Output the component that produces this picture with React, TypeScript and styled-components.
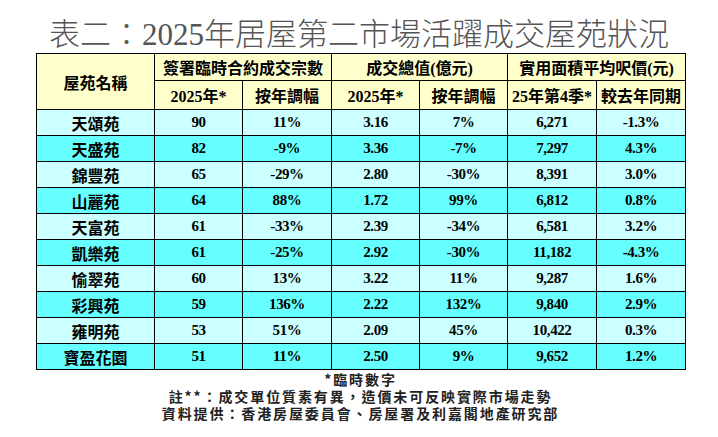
import styled, { createGlobalStyle } from 'styled-components';

type Row = {
  name: string;
  deals: string;
  dealsYoy: string;
  value: string;
  valueYoy: string;
  price: string;
  priceYoy: string;
};

const rows: Row[] = [
  { name: '天頌苑', deals: '90', dealsYoy: '11%', value: '3.16', valueYoy: '7%', price: '6,271', priceYoy: '-1.3%' },
  { name: '天盛苑', deals: '82', dealsYoy: '-9%', value: '3.36', valueYoy: '-7%', price: '7,297', priceYoy: '4.3%' },
  { name: '錦豐苑', deals: '65', dealsYoy: '-29%', value: '2.80', valueYoy: '-30%', price: '8,391', priceYoy: '3.0%' },
  { name: '山麗苑', deals: '64', dealsYoy: '88%', value: '1.72', valueYoy: '99%', price: '6,812', priceYoy: '0.8%' },
  { name: '天富苑', deals: '61', dealsYoy: '-33%', value: '2.39', valueYoy: '-34%', price: '6,581', priceYoy: '3.2%' },
  { name: '凱樂苑', deals: '61', dealsYoy: '-25%', value: '2.92', valueYoy: '-30%', price: '11,182', priceYoy: '-4.3%' },
  { name: '愉翠苑', deals: '60', dealsYoy: '13%', value: '3.22', valueYoy: '11%', price: '9,287', priceYoy: '1.6%' },
  { name: '彩興苑', deals: '59', dealsYoy: '136%', value: '2.22', valueYoy: '132%', price: '9,840', priceYoy: '2.9%' },
  { name: '雍明苑', deals: '53', dealsYoy: '51%', value: '2.09', valueYoy: '45%', price: '10,422', priceYoy: '0.3%' },
  { name: '寶盈花園', deals: '51', dealsYoy: '11%', value: '2.50', valueYoy: '9%', price: '9,652', priceYoy: '1.2%' },
];

const colWidths = [118, 88, 89, 88, 88, 89, 89];

const GlobalStyle = createGlobalStyle`
  body {
    margin: 0;
    background: #ffffff;
  }
`;

const Page = styled.div`
  width: 718px;
  height: 437px;
  display: flex;
  flex-direction: column;
  padding-left: 36px;
  box-sizing: border-box;
`;

const Title = styled.h1`
  margin: 19px 0 3px -36px;
  width: 718px;
  height: 31px;
  font-family: 'Liberation Serif', 'Noto Sans CJK TC', serif;
  font-weight: 300;
  font-size: 31px;
  line-height: 31px;
  color: #555555;
  text-align: center;
  white-space: nowrap;
`;

const Table = styled.table`
  width: 649px;
  border-collapse: collapse;
  table-layout: fixed;
  font-family: 'Liberation Serif', 'Noto Sans CJK TC', serif;
  font-weight: 700;
  color: #000;
`;

const HeadCell = styled.th<{ $h: number }>`
  background: #ffffcc;
  border: 1px solid #000;
  height: ${(p) => p.$h}px;
  padding: 0;
  font-size: 16px;
  font-weight: 700;
  text-align: center;
  white-space: nowrap;
`;

const BodyRow = styled.tr<{ $dark: boolean }>`
  background: ${(p) => (p.$dark ? '#66ffff' : '#ccffff')};
`;

const Cell = styled.td`
  border: 1px solid #000;
  height: 25px;
  padding: 0;
  font-size: 15px;
  letter-spacing: -0.4px;
  text-align: center;
  white-space: nowrap;
`;

const NameCell = styled(Cell)`
  font-size: 16px;
  letter-spacing: 0;
`;

const Notes = styled.div`
  width: 649px;
  padding-top: 1px;
  font-family: 'Noto Sans CJK TC', 'Liberation Sans', sans-serif;
  font-weight: 700;
  font-size: 14px;
  line-height: 17px;
  letter-spacing: 1.9px;
  color: #222;
  text-align: center;
`;

const NoteLine = styled.div`
  height: 17px;
  white-space: nowrap;
`;

const App = () => {
  return (
    <>
      <GlobalStyle />
      <Page>
        <Title>表二：2025年居屋第二市場活躍成交屋苑狀況</Title>
        <Table>
          <colgroup>
            {colWidths.map((w, i) => (
              <col key={i} style={{ width: w }} />
            ))}
          </colgroup>
          <thead>
            <tr>
              <HeadCell $h={26} rowSpan={2}>屋苑名稱</HeadCell>
              <HeadCell $h={26} colSpan={2}>簽署臨時合約成交宗數</HeadCell>
              <HeadCell $h={26} colSpan={2}>成交總值(億元)</HeadCell>
              <HeadCell $h={26} colSpan={2}>實用面積平均呎價(元)</HeadCell>
            </tr>
            <tr>
              <HeadCell $h={28}>2025年*</HeadCell>
              <HeadCell $h={28}>按年調幅</HeadCell>
              <HeadCell $h={28}>2025年*</HeadCell>
              <HeadCell $h={28}>按年調幅</HeadCell>
              <HeadCell $h={28}>25年第4季*</HeadCell>
              <HeadCell $h={28}>較去年同期</HeadCell>
            </tr>
          </thead>
          <tbody>
            {rows.map((r, i) => (
              <BodyRow key={r.name} $dark={i % 2 === 1}>
                <NameCell>{r.name}</NameCell>
                <Cell>{r.deals}</Cell>
                <Cell>{r.dealsYoy}</Cell>
                <Cell>{r.value}</Cell>
                <Cell>{r.valueYoy}</Cell>
                <Cell>{r.price}</Cell>
                <Cell>{r.priceYoy}</Cell>
              </BodyRow>
            ))}
          </tbody>
        </Table>
        <Notes>
          <NoteLine>*臨時數字</NoteLine>
          <NoteLine>註**：成交單位質素有異，造價未可反映實際市場走勢</NoteLine>
          <NoteLine>資料提供：香港房屋委員會、房屋署及利嘉閣地產研究部</NoteLine>
        </Notes>
      </Page>
    </>
  );
};

export default App;
